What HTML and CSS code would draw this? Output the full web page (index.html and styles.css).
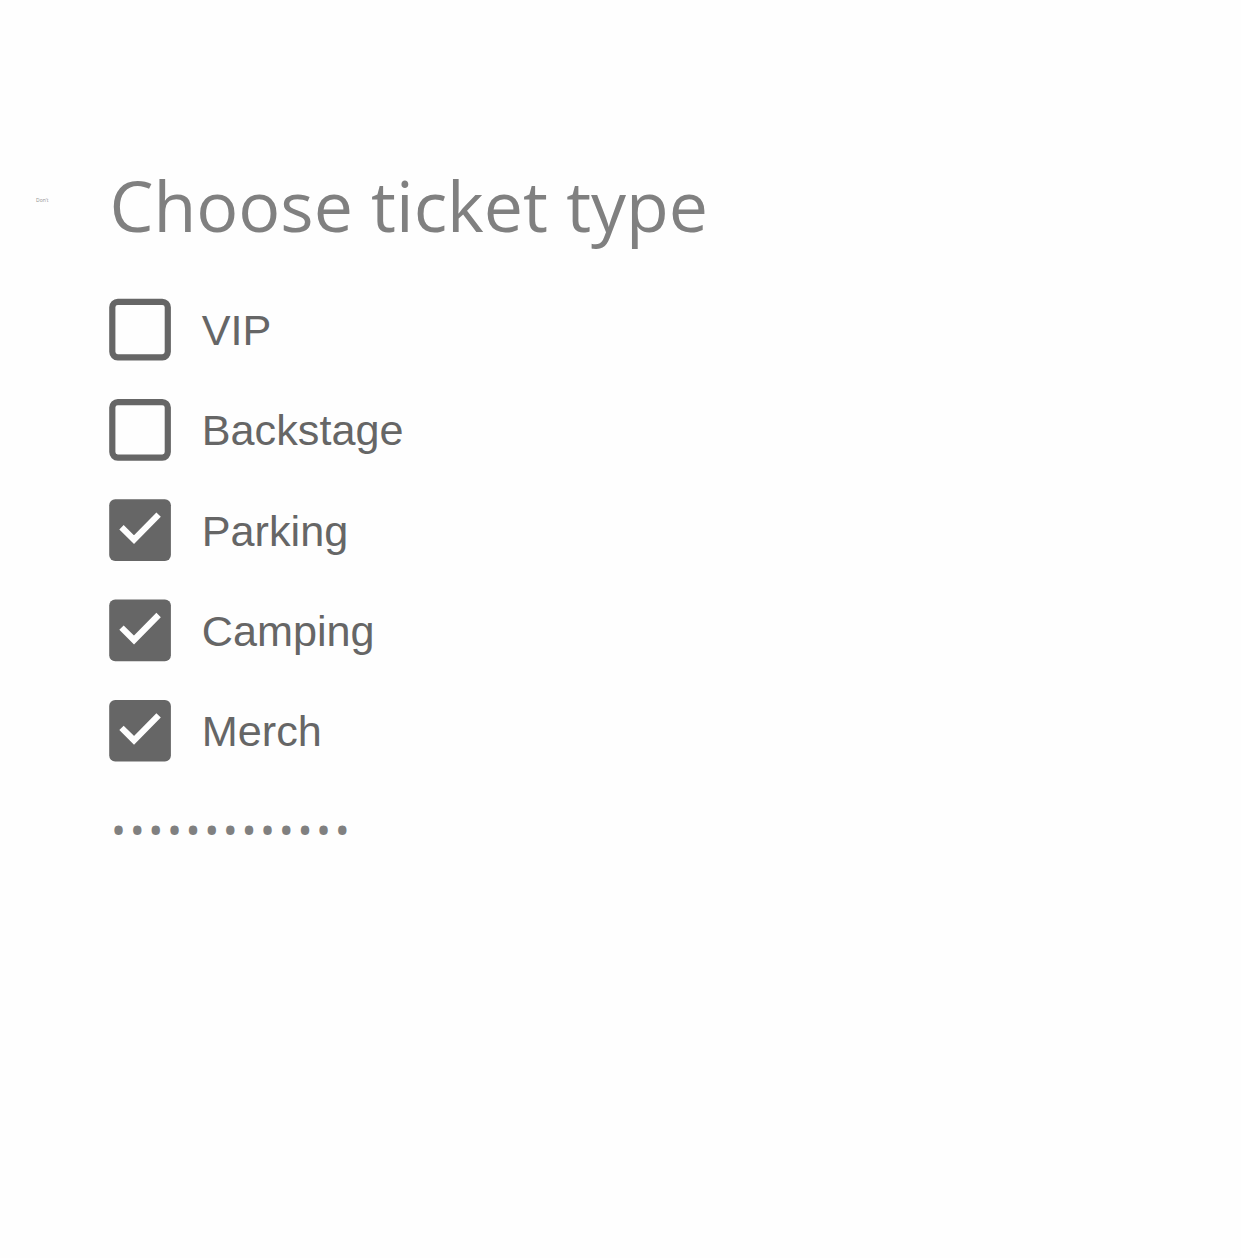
FILE: index.html
```
<!DOCTYPE html>
<html lang="en">
<head>
<meta charset="utf-8">
<title>Choose ticket type</title>
<link rel="stylesheet" href="styles.css">
</head>
<body>
<main class="page">
  <span class="note">Don't</span>
  <section class="picker">
    <h1 class="title">Choose ticket type</h1>
    <ul class="options">
      <li class="option"><svg class="box" viewBox="0 0 62 62"><rect class="empty" x="3.3" y="2.8" width="55.5" height="55.5" rx="5.5"/></svg><span class="label">VIP</span></li>
      <li class="option"><svg class="box" viewBox="0 0 62 62"><rect class="empty" x="3.3" y="3.1" width="55.5" height="55.5" rx="5.5"/></svg><span class="label label-raised">Backstage</span></li>
      <li class="option"><svg class="box" viewBox="0 0 62 62"><rect class="full" x="0.2" y="0.3" width="61.7" height="61.7" rx="6"/><path d="M12.5 28.2L25 40.6L49.6 15.6"/></svg><span class="label">Parking</span></li>
      <li class="option"><svg class="box" viewBox="0 0 62 62"><rect class="full" x="0.2" y="-0.4" width="61.7" height="61.7" rx="6"/><path d="M12.5 27.6L25 40L49.6 15"/></svg><span class="label">Camping</span></li>
      <li class="option"><svg class="box" viewBox="0 0 62 62"><rect class="full" x="0.2" y="-0.1" width="61.7" height="61.7" rx="6"/><path d="M12.5 27.9L25 40.3L49.6 15.3"/></svg><span class="label">Merch</span></li>
    </ul>
    <div class="secret">•••••••••••••</div>
  </section>
</main>
</body>
</html>
```
FILE: styles.css
```
body {
  margin: 0;
  background: #fefefe;
}
.page {
  display: grid;
  grid-template-columns: 73px 1fr;
  min-height: 1258px;
  box-sizing: border-box;
  padding: 157px 0 0 36px;
}
.note {
  padding-top: 40px;
  font: 5px/7px "Open Sans", sans-serif;
  color: #909090;
}
.title {
  margin: 0;
  padding-left: 0.4px;
  height: 141.8px;
  font: 400 69.9px/96px "Open Sans", sans-serif;
  color: #808080;
  white-space: nowrap;
}
.options {
  margin: 0;
  padding: 0;
  list-style: none;
  display: flex;
  flex-direction: column;
  gap: 38.3px;
}
.option {
  display: flex;
  align-items: center;
  gap: 30.8px;
  height: 62px;
  color: #666;
}
.box {
  flex: none;
  width: 62px;
  height: 62px;
  overflow: visible;
}
.box .empty {
  fill: none;
  stroke: #666;
  stroke-width: 6.2;
}
.box .full {
  fill: #666;
}
.box path {
  fill: none;
  stroke: #fefefe;
  stroke-width: 6.2;
}
.label {
  padding-top: 1px;
  font: 43.2px/50px "Liberation Sans", Arial, sans-serif;
}
.label-raised {
  padding: 0 0 1px;
}
.secret {
  margin: 34.5px 0 0 2px;
  font: 40px/68px "Open Sans", sans-serif;
  letter-spacing: 3.6px;
  color: #808080;
}
```
